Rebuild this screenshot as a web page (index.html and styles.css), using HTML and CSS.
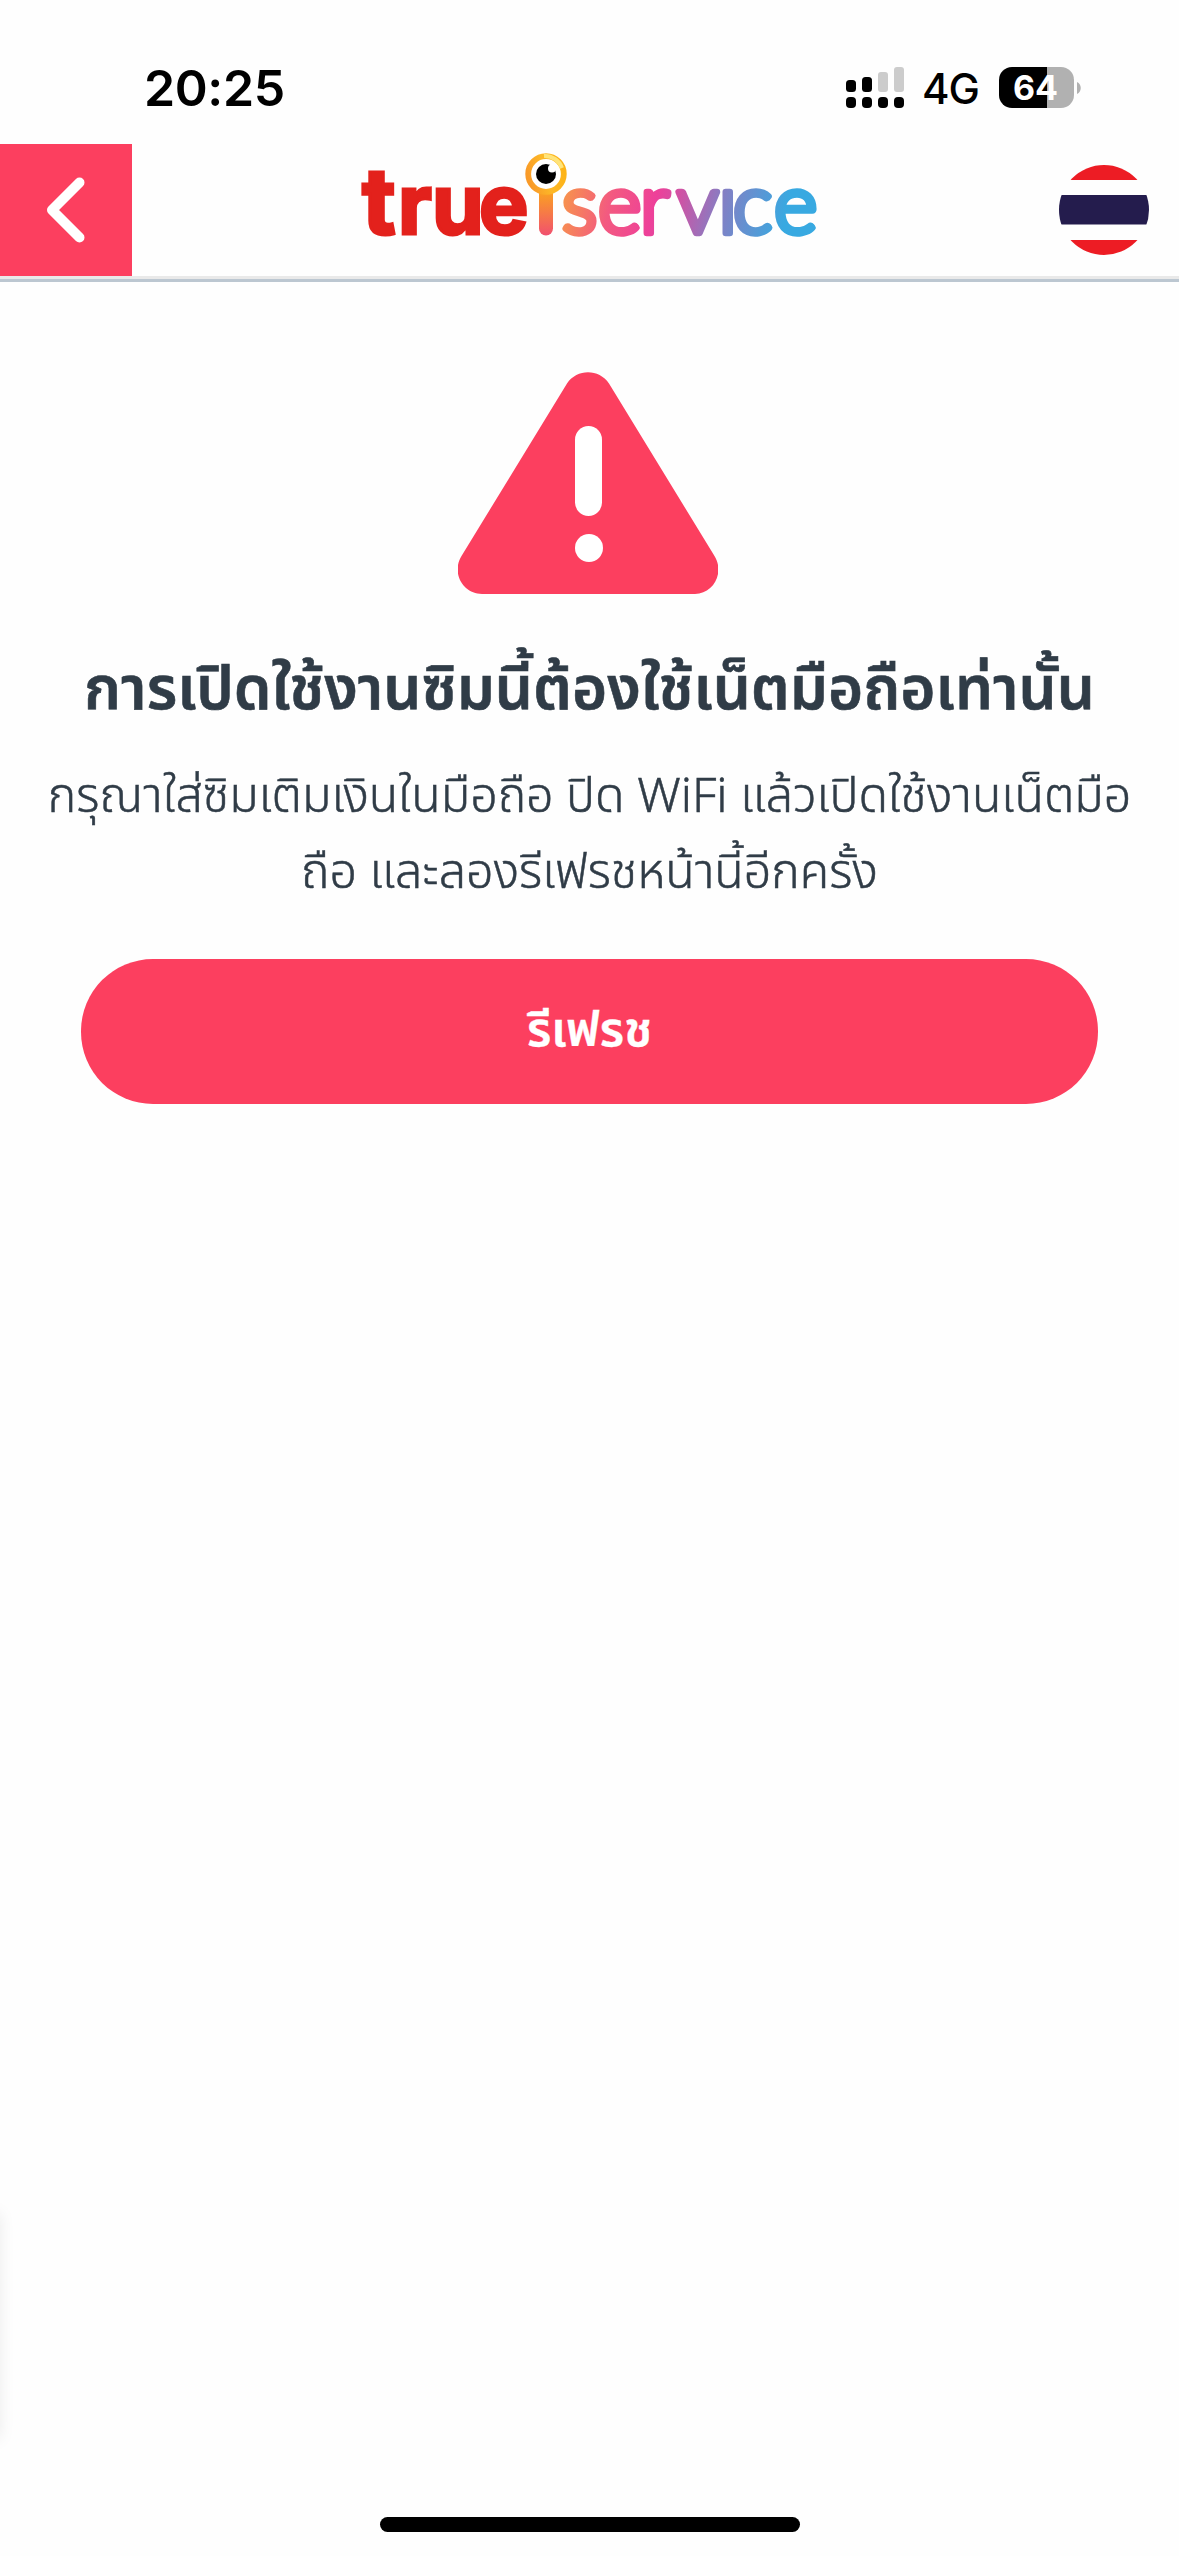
FILE: index.html
```html
<!DOCTYPE html>
<html lang="th">
<head>
<meta charset="utf-8">
<title>True iService</title>
<link rel="stylesheet" href="styles.css">
</head>
<body>
<div class="screen">
  <div class="status">
    <span class="time">20:25</span>
    <div class="indicators">
      <svg class="signal" viewBox="0 0 58 41">
        <g fill="#ccc"><rect x="32" y="5" width="10" height="20" rx="3"/><rect x="48" y="0" width="10" height="25" rx="3"/></g>
        <rect x="0" y="13" width="10" height="12" rx="3.5"/><rect x="16" y="10" width="10" height="15" rx="3.5"/>
        <rect x="0" y="30" width="10" height="11" rx="4"/><rect x="16" y="30" width="10" height="11" rx="4"/><rect x="32" y="30" width="10" height="11" rx="4"/><rect x="48" y="30" width="10" height="11" rx="4"/>
      </svg>
      <span class="network">4G</span>
      <div class="battery"><span class="level">64</span></div>
      <svg class="battery-cap" viewBox="0 0 4 12"><path d="M0 0C5 2 5 10 0 12Z" fill="#b1b1b1"/></svg>
    </div>
  </div>
  <header class="header">
    <button class="back" aria-label="ย้อนกลับ">
      <svg viewBox="0 0 132 132"><path d="M79.500 38.500L52 66L79.500 93.500" fill="none" stroke="#fff" stroke-width="10" stroke-linecap="round" stroke-linejoin="round"/></svg>
    </button>
    <svg class="logo" viewBox="350 150 480 100">
      <defs>
        <linearGradient id="service" gradientUnits="userSpaceOnUse" x1="568" y1="190" x2="780" y2="240">
          <stop offset="0" stop-color="#f78f50"/><stop offset=".2" stop-color="#f35a80"/><stop offset=".4" stop-color="#ee4099"/><stop offset=".52" stop-color="#cb55a6"/><stop offset=".7" stop-color="#847fc4"/><stop offset="1" stop-color="#38a9e1"/>
        </linearGradient>
        <linearGradient id="stem" x1="0" y1="0" x2="0" y2="1"><stop offset="0" stop-color="#fba51d"/><stop offset="1" stop-color="#f1506f"/></linearGradient>
        <linearGradient id="ring" x1="0" y1=".6" x2="1" y2=".3"><stop offset="0" stop-color="#f99a28"/><stop offset=".5" stop-color="#fdb827"/><stop offset="1" stop-color="#fdb316"/></linearGradient>
      </defs>
      <text class="logo-true" y="234" x="362 398 432 479"><tspan class="logo-t">t</tspan>rue</text>
      <text class="logo-service" fill="url(#service)" stroke="url(#service)" y="232.500" x="562 598 640 677 718.500 733 774">servıce</text>
      <path d="M539 190H553V228.500A7 7 0 0 1 539 228.500Z" fill="url(#stem)"/>
      <circle cx="546" cy="174" r="17.800" fill="#fff" stroke="url(#ring)" stroke-width="5.800"/>
      <path d="M544 156A18 18 0 0 1 562 168" fill="none" stroke="#ffe47a" stroke-width="4"/>
      <circle cx="546" cy="174" r="10"/><circle cx="552" cy="168.500" r="4" fill="#fff"/>
    </svg>
    <svg class="flag" viewBox="0 0 90 90">
      <clipPath id="disc"><circle cx="45" cy="45" r="45"/></clipPath>
      <g clip-path="url(#disc)"><path d="M0 0H90V15H0ZM0 75H90V90H0Z" fill="#ed1c24"/><path d="M0 30H90V59.500H0Z" fill="#241c4d"/></g>
    </svg>
  </header>
  <main class="content">
    <svg class="warning" viewBox="0 0 260 222">
      <path d="M109 11.500C119-3.500 141-3.500 151 11.500L256.500 184C267 201 255 222 237 222H24C5 222-7 201 3.500 184Z" fill="#fc3f5f"/>
      <rect x="117" y="54" width="27" height="90" rx="13.500" fill="#fff"/><circle cx="131" cy="176" r="14" fill="#fff"/>
    </svg>
    <h1 class="title">การเปิดใช้งานซิมนี้ต้องใช้เน็ตมือถือเท่านั้น</h1>
    <p class="message">กรุณาใส่ซิมเติมเงินในมือถือ ปิด WiFi แล้วเปิดใช้งานเน็ตมือ<br>ถือ และลองรีเฟรชหน้านี้อีกครั้ง</p>
    <button class="refresh">รีเฟรช</button>
  </main>
  <div class="edge-shadow"></div>
  <div class="home-indicator"></div>
</div>
</body>
</html>
```
FILE: styles.css
```css
* { box-sizing: border-box; }
body { margin: 0; background: #fefefe; color: #303c47; font-family: "Noto Sans Thai", "Noto Sans", sans-serif; }
.screen { position: relative; display: flex; flex-direction: column; width: 1179px; height: 2556px; overflow: hidden; }
.status { display: flex; justify-content: space-between; height: 144px; padding: 0 98px 0 144px; color: #000; font-family: Inter, sans-serif; }
.time { margin-top: 58px; font-size: 50px; line-height: 60px; font-weight: 600; letter-spacing: -.4px; }
.indicators { display: flex; align-items: flex-start; padding-top: 67px; }
.signal { width: 58px; height: 41px; }
.network { width: 77px; margin-left: 18px; font-size: 42px; line-height: 44px; font-weight: 500; letter-spacing: -1px; }
.battery { width: 75px; height: 41px; padding-right: 2px; border-radius: 13px; background: linear-gradient(90deg, #000 48px, #b1b1b1 48px); text-align: center; }
.level { color: #fff; font-size: 34px; line-height: 41px; font-weight: 700; }
.battery-cap { width: 4px; height: 12px; margin: 15px 0 0 3px; }
.header { display: flex; justify-content: space-between; align-items: flex-start; height: 138px; padding-right: 30px; border-bottom: 3px solid #bcc7d1; box-shadow: inset 0 -3px #e9e9e9; }
.back { width: 132px; height: 132px; padding: 0; border: 0; background: #fc3f5f; }
.back svg { display: block; width: 132px; height: 132px; }
.logo { width: 480px; height: 100px; margin: 6px 11px 0 0; }
.logo-true { font: 700 83px Inter, sans-serif; fill: #e3211c; stroke: #e3211c; stroke-width: 3px; }
.logo-t { font-size: 92px; }
.logo-service { font: 300 83px Lato, sans-serif; stroke-width: 6.5px; stroke-linejoin: round; }
.flag { width: 90px; height: 90px; margin-top: 21px; }
.content { display: flex; flex-direction: column; align-items: center; padding: 90px 0 0; }
.warning { width: 260px; height: 222px; margin-right: 3px; }
.title { margin: 49px 0 0; font-size: 60.2px; line-height: 96px; font-weight: 600; white-space: nowrap; -webkit-text-stroke: .6px currentColor; }
.message { margin: 21px 0 0; font-size: 48.3px; line-height: 76px; font-weight: 300; text-align: center; white-space: nowrap; -webkit-text-stroke: .5px currentColor; }
.refresh { width: 1017px; height: 145px; margin-top: 47px; padding: 0; border: 0; border-radius: 72px; background: #fc3f5f; color: #fff; font: 600 48px "Noto Sans Thai", "Noto Sans", sans-serif; -webkit-text-stroke: .4px currentColor; }
.edge-shadow { position: absolute; left: -20px; top: 2213px; width: 20px; height: 226px; box-shadow: 0 0 16px rgba(0,0,0,.08); }
.home-indicator { position: absolute; left: 380px; top: 2517px; width: 420px; height: 15px; border-radius: 8px; background: #000; }
```
